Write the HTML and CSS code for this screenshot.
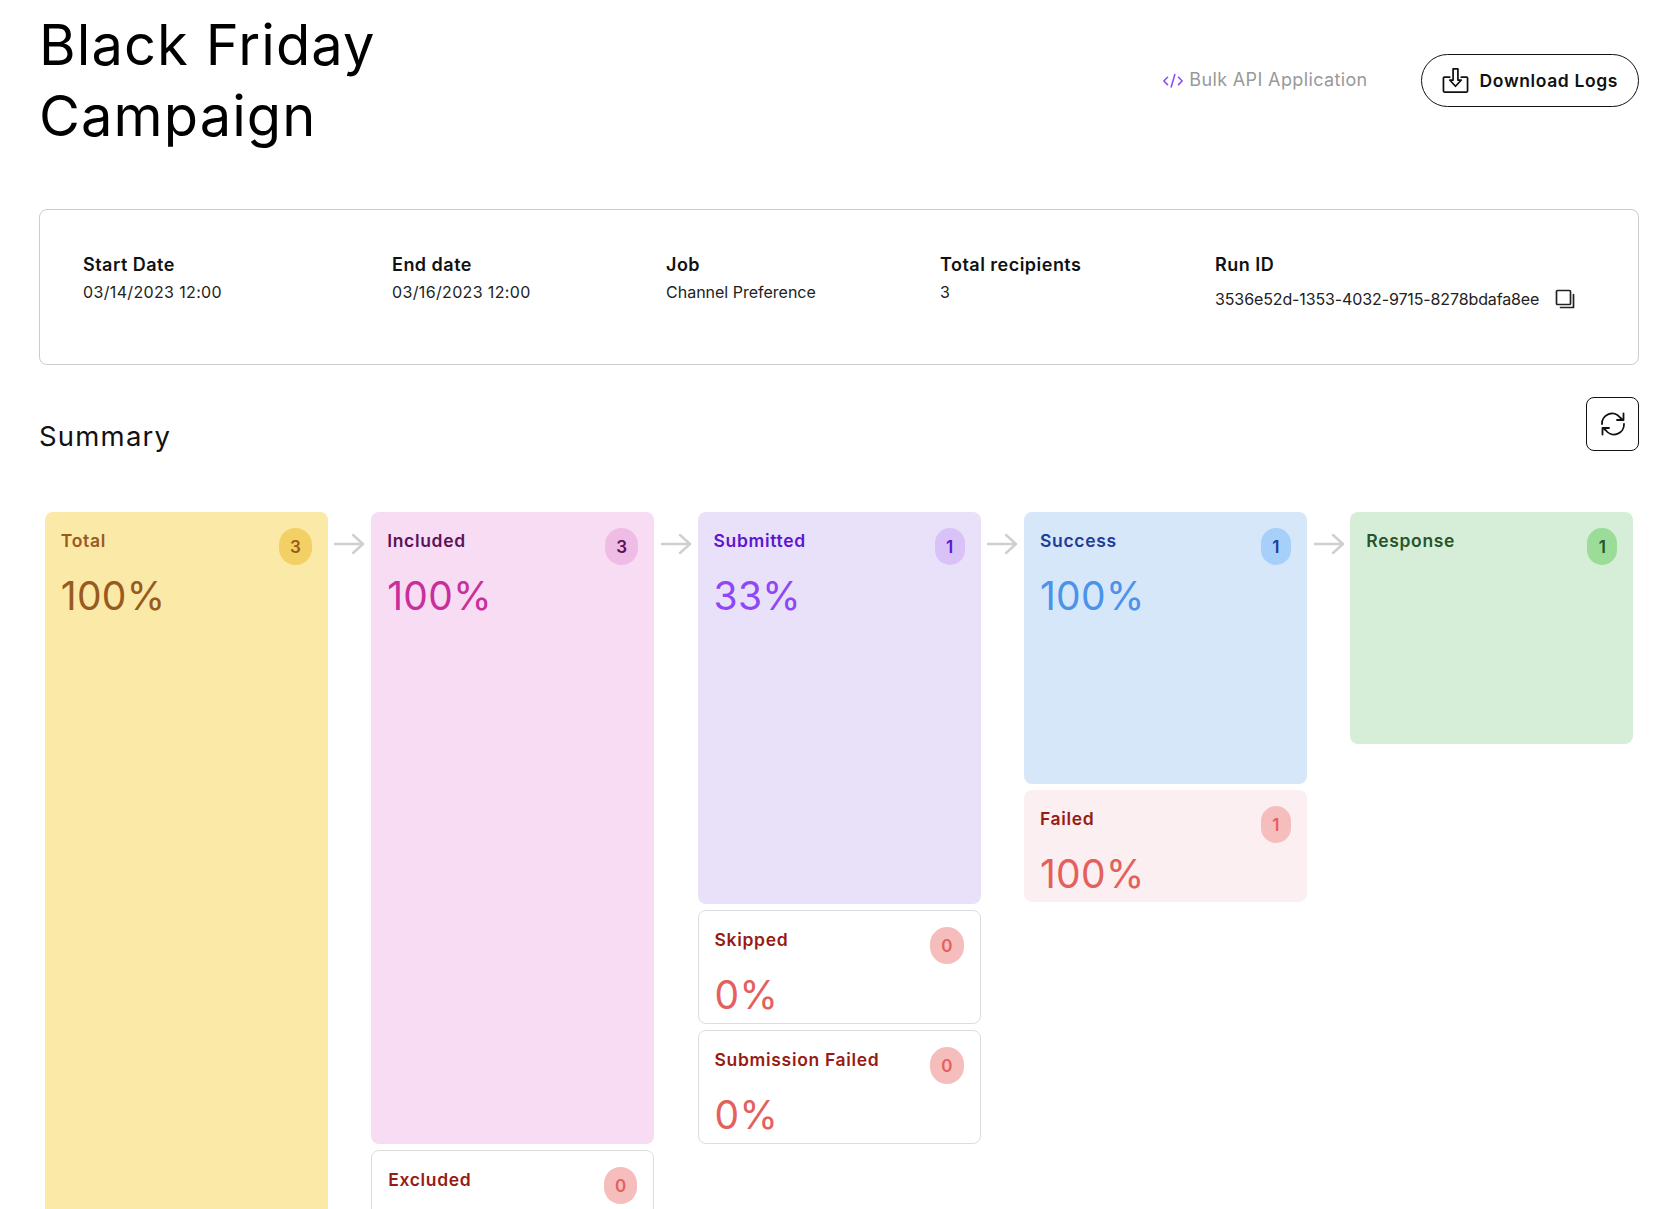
FILE: index.html
```html
<!DOCTYPE html>
<html lang="en">
<head>
  <meta charset="UTF-8">
  <title>Black Friday Campaign</title>
  <link rel="stylesheet" href="styles.css">
</head>
<body>

<div class="page">
  <div class="header">
    <h1>Black Friday Campaign</h1>
    <div class="header-actions">
      <div class="api-tag">
        <svg class="code-icon" viewBox="0 0 24 16" fill="none" stroke="#8b4cf0" stroke-width="1.7" stroke-linecap="round" stroke-linejoin="round">
          <path d="M6 4.5 2 8.5l4 4"/><path d="M14 1.5 10 15"/><path d="M18 4.5l4 4-4 4"/>
        </svg>
        <span>Bulk API Application</span>
      </div>
      <button class="download-btn">
        <svg class="download-icon" viewBox="0 0 28 28" fill="none" stroke="#111" stroke-width="1.8" stroke-linejoin="round" stroke-linecap="round">
          <path d="M8 10.5H2.5a1 1 0 0 0-1 1V25a1 1 0 0 0 1 1h23a1 1 0 0 0 1-1V11.5a1 1 0 0 0-1-1H20"/>
          <path d="M11.5 2h5v11.5h3.5L14 20l-6-6.5h3.5z"/>
        </svg>
        Download Logs
      </button>
    </div>
  </div>

  <div class="info-card">
    <div class="info-item">
      <div class="info-label">Start Date</div>
      <div class="info-value date">03/14/2023 12:00</div>
    </div>
    <div class="info-item">
      <div class="info-label">End date</div>
      <div class="info-value date">03/16/2023 12:00</div>
    </div>
    <div class="info-item">
      <div class="info-label">Job</div>
      <div class="info-value">Channel Preference</div>
    </div>
    <div class="info-item">
      <div class="info-label">Total recipients</div>
      <div class="info-value">3</div>
    </div>
    <div class="info-item">
      <div class="info-label">Run ID</div>
      <div class="info-value run-id">
        3536e52d-1353-4032-9715-8278bdafa8ee
        <svg class="copy-icon" viewBox="0 0 20 20" fill="none" stroke="#222" stroke-width="1.7" stroke-linejoin="round">
          <rect x="1.5" y="1.5" width="14" height="14" rx="1"/>
          <path d="M18.5 5.5v13h-13" stroke-linecap="round"/>
        </svg>
      </div>
    </div>
  </div>

  <div class="summary-head">
    <h2>Summary</h2>
    <button class="refresh-btn">
      <svg viewBox="0 0 26 26" fill="none" stroke="#111" stroke-width="1.8" stroke-linecap="round" stroke-linejoin="round">
        <path d="M2 13a10 10 0 0 1 18-6.5l3 2.5"/><path d="M23.5 2.5V9h-6.5"/>
        <path d="M24 13a10 10 0 0 1-18 6.5L3 17"/><path d="M2.5 23.5V17H9"/>
      </svg>
    </button>
  </div>

  <div class="board">
    <div class="column">
      <div class="card card-total tall-total">
        <div class="card-top"><span class="card-label">Total</span><span class="badge">3</span></div>
        <div class="card-pct">100%</div>
      </div>
    </div>
    <svg class="arrow" viewBox="0 0 32 22" fill="none" stroke="#cfcfcf" stroke-width="2.4" stroke-linecap="round" stroke-linejoin="round"><path d="M2 11h28"/><path d="M20 2l10 9-10 9"/></svg>
    <div class="column">
      <div class="card card-included tall-included">
        <div class="card-top"><span class="card-label">Included</span><span class="badge">3</span></div>
        <div class="card-pct">100%</div>
      </div>
      <div class="card card-outline">
        <div class="card-top"><span class="card-label">Excluded</span><span class="badge">0</span></div>
      </div>
    </div>
    <svg class="arrow" viewBox="0 0 32 22" fill="none" stroke="#cfcfcf" stroke-width="2.4" stroke-linecap="round" stroke-linejoin="round"><path d="M2 11h28"/><path d="M20 2l10 9-10 9"/></svg>
    <div class="column">
      <div class="card card-submitted tall-submitted">
        <div class="card-top"><span class="card-label">Submitted</span><span class="badge">1</span></div>
        <div class="card-pct">33%</div>
      </div>
      <div class="card card-outline">
        <div class="card-top"><span class="card-label">Skipped</span><span class="badge">0</span></div>
        <div class="card-pct">0%</div>
      </div>
      <div class="card card-outline">
        <div class="card-top"><span class="card-label">Submission Failed</span><span class="badge">0</span></div>
        <div class="card-pct">0%</div>
      </div>
    </div>
    <svg class="arrow" viewBox="0 0 32 22" fill="none" stroke="#cfcfcf" stroke-width="2.4" stroke-linecap="round" stroke-linejoin="round"><path d="M2 11h28"/><path d="M20 2l10 9-10 9"/></svg>
    <div class="column">
      <div class="card card-success tall-success">
        <div class="card-top"><span class="card-label">Success</span><span class="badge">1</span></div>
        <div class="card-pct">100%</div>
      </div>
      <div class="card card-failed">
        <div class="card-top"><span class="card-label">Failed</span><span class="badge">1</span></div>
        <div class="card-pct">100%</div>
      </div>
    </div>
    <svg class="arrow" viewBox="0 0 32 22" fill="none" stroke="#cfcfcf" stroke-width="2.4" stroke-linecap="round" stroke-linejoin="round"><path d="M2 11h28"/><path d="M20 2l10 9-10 9"/></svg>
    <div class="column">
      <div class="card card-response tall-response">
        <div class="card-top"><span class="card-label">Response</span><span class="badge">1</span></div>
      </div>
    </div>
  </div>
</div>

</body>
</html>
```

FILE: styles.css
```css
html, body {
  margin: 0;
  height: 1209px;
  overflow: hidden;
  background: #fff;
}
body {
  font-family: Inter, "Liberation Sans", sans-serif;
  color: #111;
}
button {
  font-family: inherit;
  background: #fff;
  cursor: pointer;
}
.page {
  padding: 10px 24px 0 39px;
}

/* header */
.header {
  display: flex;
  justify-content: space-between;
  align-items: flex-start;
  height: 199px;
}
h1 {
  margin: 0;
  width: 420px;
  font-size: 56px;
  font-weight: 400;
  line-height: 71px;
  letter-spacing: 1.1px;
  color: #000;
}
.header-actions {
  display: flex;
  align-items: center;
  gap: 53px;
  margin-top: 44px;
}
.api-tag {
  display: flex;
  align-items: center;
  gap: 5px;
  font-size: 18px;
  letter-spacing: 0.37px;
  color: #999;
  margin-bottom: 3px;
}
.code-icon {
  width: 22px;
  height: 15px;
  margin-top: 3px;
}
.download-btn {
  display: flex;
  align-items: center;
  gap: 11px;
  height: 53px;
  padding: 0 20px;
  border: 1px solid #111;
  border-radius: 27px;
  font-size: 17.5px;
  font-weight: 600;
  letter-spacing: 0.62px;
  color: #111;
}
.download-icon {
  width: 27px;
  height: 27px;
}

/* info card */
.info-card {
  display: grid;
  grid-template-columns: 309px 274px 274px 275px 1fr;
  height: 156px;
  box-sizing: border-box;
  padding: 44px 43px 0;
  border: 1px solid #ccc;
  border-radius: 8px;
}
.info-label {
  font-size: 18px;
  font-weight: 600;
  line-height: 22px;
  letter-spacing: 0.48px;
  color: #111;
}
.info-value {
  margin-top: 5px;
  font-size: 16px;
  line-height: 22px;
  color: #222;
}
.date {
  letter-spacing: 0.35px;
}
.run-id {
  display: flex;
  align-items: center;
  gap: 16px;
  margin-top: 12px;
  letter-spacing: -0.12px;
  white-space: nowrap;
}
.copy-icon {
  width: 20px;
  height: 20px;
}

/* summary */
.summary-head {
  display: flex;
  justify-content: space-between;
  align-items: flex-start;
  height: 115px;
  margin-top: 32px;
}
h2 {
  margin: 24px 0 0;
  font-size: 27.5px;
  font-weight: 400;
  line-height: 30px;
  letter-spacing: 1.2px;
  color: #111;
}
.refresh-btn {
  display: flex;
  align-items: center;
  justify-content: center;
  width: 53px;
  height: 54px;
  padding: 0;
  border: 1px solid #111;
  border-radius: 8px;
}
.refresh-btn svg {
  width: 26px;
  height: 26px;
}

/* board */
.board {
  display: flex;
  align-items: flex-start;
  padding-left: 5.8px;
}
.column {
  display: flex;
  flex-direction: column;
  gap: 6px;
  width: 283px;
  flex: none;
}
.arrow {
  width: 32px;
  height: 22px;
  flex: none;
  margin: 21px 5.7px 0;
}
.card {
  box-sizing: border-box;
  padding: 16px;
  border-radius: 8px;
  background: #fbeff1;
  --label: #971b13;
  --pct: #e4605d;
  --badge: #f6bdbd;
  --count: #e4605d;
}
.card-top {
  display: flex;
  justify-content: space-between;
  align-items: flex-start;
  height: 37px;
}
.card-label {
  margin-top: 2px;
  font-size: 17.5px;
  font-weight: 600;
  line-height: 22px;
  letter-spacing: 0.68px;
  color: var(--label);
}
.badge {
  min-width: 8px;
  height: 37px;
  padding: 0 11px;
  border-radius: 18px;
  background: var(--badge);
  font-size: 17px;
  font-weight: 600;
  line-height: 38px;
  text-align: center;
  color: var(--count);
}
.card-pct {
  margin-top: 6px;
  font-size: 39px;
  font-weight: 400;
  line-height: 50px;
  letter-spacing: 0.3px;
  color: var(--pct);
}
.card-outline {
  background: #fff;
  border: 1px solid #ddd;
  height: 114px;
}
.card-failed {
  height: 112px;
}
.card-total {
  background: #fbe9a7;
  --label: #985a1e;
  --pct: #985a1e;
  --badge: #f3d063;
  --count: #985a1e;
}
.card-included {
  background: #f8dcf3;
  --label: #5c1159;
  --pct: #c92f9b;
  --badge: #efbce5;
  --count: #5c1159;
}
.card-submitted {
  background: #e9e1f9;
  --label: #5d14d3;
  --pct: #8f47f5;
  --badge: #d8c2f7;
  --count: #5d14d3;
}
.card-success {
  background: #d7e7fa;
  --label: #1f3c97;
  --pct: #4b93ea;
  --badge: #a6cff9;
  --count: #1f3c97;
}
.card-response {
  background: #d6edd8;
  --label: #25552a;
  --badge: #9bdc98;
  --count: #25552a;
}
.tall-total {
  height: 760px;
}
.tall-included {
  height: 632px;
}
.tall-submitted {
  height: 392px;
}
.tall-success {
  height: 272px;
}
.tall-response {
  height: 232px;
}
```
